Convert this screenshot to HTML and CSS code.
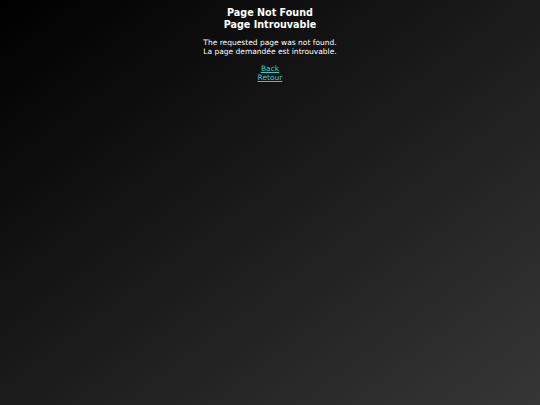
FILE: index.html
```html
<!DOCTYPE html>
<html>
<head>
<meta charset="utf-8">
<link rel="stylesheet" href="styles.css">
</head>
<body>
<div class="page">
  <h1 class="title">Page Not Found<br>Page Introuvable</h1>
  <p class="msg">The requested page was not found.<br>La page demandée est introuvable.</p>
  <p class="links"><a href="#">Back</a><br><a href="#">Retour</a></p>
</div>
</body>
</html>
```
FILE: styles.css
```css
html, body {
  margin: 0;
  height: 100%;
}
body {
  background: linear-gradient(to bottom right, #000000, #363636);
  color: #ffffff;
  font-family: "DejaVu Sans", Verdana, sans-serif;
  text-align: center;
}
.page {
  padding-top: 7px;
}
.title {
  font-size: 9.6px;
  line-height: 12px;
  margin: 0;
  font-weight: bold;
}
.msg {
  font-size: 7.5px;
  line-height: 9px;
  margin: 7px 0 0;
}
.links {
  font-size: 7.5px;
  line-height: 9px;
  margin: 8px 0 0;
}
.links a {
  color: #33cccc;
}
```
